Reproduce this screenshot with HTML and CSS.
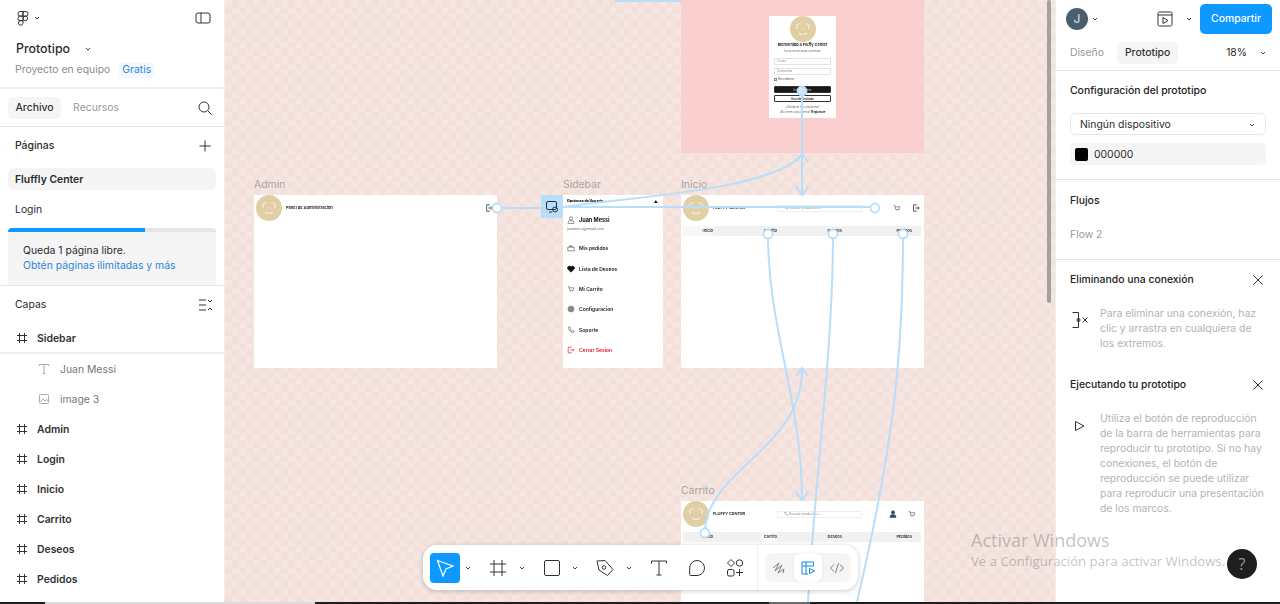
FILE: index.html
```html
<!DOCTYPE html>
<html lang="es">
<head>
<meta charset="utf-8">
<title>Prototipo</title>
<link rel="stylesheet" href="styles.css">
</head>
<body>
<div class="app">
  <div class="main">
    <aside class="left">
      <header class="file-head">
        <div class="logo-row">
          <svg class="ic16" viewBox="0 0 16 16"><path d="M8 1.500H5.200a2.300 2.300 0 0 0 0 4.600H8zM8 1.500h2.800a2.300 2.300 0 0 1 0 4.600H8zM8 6.100H5.200a2.300 2.300 0 0 0 0 4.600H8zM8 8.400a2.300 2.300 0 1 1 4.600 0 2.300 2.300 0 0 1-4.600 0zM8 10.700H5.200A2.300 2.300 0 1 0 8 13z"/></svg>
          <svg class="chev" viewBox="0 0 8 8"><path d="M2 3l2 2 2-2"/></svg>
          <span class="grow"></span>
          <svg class="ic16 panel-ic" viewBox="0 0 16 16"><rect x="1" y="3" width="14" height="10" rx="2"/><path d="M6 3v10"/></svg>
        </div>
        <div class="file-title"><span>Prototipo</span><svg class="chev" viewBox="0 0 8 8"><path d="M2 3l2 2 2-2"/></svg></div>
        <div class="file-sub"><span>Proyecto en equipo</span><span class="badge">Gratis</span></div>
      </header>
      <div class="tabs-row">
        <span class="pill">Archivo</span><span class="muted">Recursos</span><span class="grow"></span>
        <svg class="ic16" viewBox="0 0 16 16"><circle cx="7" cy="7" r="5"/><path d="M11 11l3.500 3.500"/></svg>
      </div>
      <section class="pages">
        <div class="sec-head strong"><span>Páginas</span><svg class="ic16" viewBox="0 0 16 16"><path d="M8 2.500v11M2.500 8h11"/></svg></div>
        <div class="page-row active">Fluffly Center</div>
        <div class="page-row">Login</div>
      </section>
      <div class="upsell">
        <div class="meter"><div class="meter-fill"></div></div>
        <p>Queda 1 página libre.<br><a>Obtén páginas ilimitadas y más</a></p>
      </div>
      <div class="sec-head capas"><span>Capas</span>
        <svg class="ic16" viewBox="0 0 16 16"><path d="M2 3h7M2 8h7M2 13h7M11 3l2 2 2-2M11 13l2-2 2 2"/></svg>
      </div>
      <div class="layer frame sel"><svg class="ic12" viewBox="0 0 12 12"><path d="M3.500 1v10M8.500 1v10M1 3.500h10M1 8.500h10"/></svg>Sidebar</div>
      <div class="layer child"><svg class="ic12 soft" viewBox="0 0 12 12"><path d="M1.500 3V1.500h9V3M6 1.500v9M4.500 10.500h3"/></svg>Juan Messi</div>
      <div class="layer child"><svg class="ic12 soft" viewBox="0 0 12 12"><rect x="1.500" y="1.500" width="9" height="9" rx="1"/><path d="M2 9l3-3 2 2 1.500-1.500L10 8"/></svg>image 3</div>
      <div class="layer frame"><svg class="ic12" viewBox="0 0 12 12"><path d="M3.500 1v10M8.500 1v10M1 3.500h10M1 8.500h10"/></svg>Admin</div>
      <div class="layer frame"><svg class="ic12" viewBox="0 0 12 12"><path d="M3.500 1v10M8.500 1v10M1 3.500h10M1 8.500h10"/></svg>Login</div>
      <div class="layer frame"><svg class="ic12" viewBox="0 0 12 12"><path d="M3.500 1v10M8.500 1v10M1 3.500h10M1 8.500h10"/></svg>Inicio</div>
      <div class="layer frame"><svg class="ic12" viewBox="0 0 12 12"><path d="M3.500 1v10M8.500 1v10M1 3.500h10M1 8.500h10"/></svg>Carrito</div>
      <div class="layer frame"><svg class="ic12" viewBox="0 0 12 12"><path d="M3.500 1v10M8.500 1v10M1 3.500h10M1 8.500h10"/></svg>Deseos</div>
      <div class="layer frame"><svg class="ic12" viewBox="0 0 12 12"><path d="M3.500 1v10M8.500 1v10M1 3.500h10M1 8.500h10"/></svg>Pedidos</div>
    </aside>

    <main class="canvas">
      <div class="section-pink"></div>

      <div class="card login-card">
        <span class="brand"><svg viewBox="0 0 26 26"><path d="M8 8h3M15 8h3M7 8v5M19 8v5M9 17c2 2 6 2 8 0M11 13h1M14 13h1"/></svg></span>
        <b class="l-title">Bienvenido a Fluffy Center</b>
        <span class="l-sub">Inicia sesión para continuar</span>
        <span class="l-input">Correo</span>
        <span class="l-input">Contraseña</span>
        <span class="l-check"><i></i>Recordarme</span>
        <span class="l-btn dark">Iniciar Sesión</span>
        <span class="l-btn">Acceder Invitado</span>
        <span class="l-sub">¿Olvidaste tu contraseña?</span>
        <span class="l-sub">¿No tienes una cuenta? <b>Registrate</b></span>
      </div>

      <span class="label label-admin">Admin</span>
      <div class="card admin">
        <div class="bar-row">
          <span class="brand"><svg viewBox="0 0 26 26"><path d="M8 8h3M15 8h3M7 8v5M19 8v5M9 17c2 2 6 2 8 0M11 13h1M14 13h1"/></svg></span>
          <b class="tiny">Panel de Administracion</b>
          <span class="grow"></span>
          <svg class="mini exit" viewBox="0 0 10 10"><path d="M6 1H2v8h4M4 5h5M7 3l2 2-2 2"/></svg>
        </div>
      </div>

      <span class="label label-side">Sidebar</span>
      <div class="card side">
        <div class="side-head"><b>Opciones de Usuario</b><span>▲</span></div>
        <div class="side-user"><svg class="mini" viewBox="0 0 10 10"><circle cx="5" cy="3" r="2"/><path d="M1.500 9.500V8a2 2 0 0 1 2-2h3a2 2 0 0 1 2 2v1.500z"/></svg><b>Juan Messi</b></div>
        <div class="side-mail">juanmessi@email.com</div>
        <div class="side-row"><svg class="mini" viewBox="0 0 10 10"><path d="M1 4h8v4.500H1zM3 4V2h2v2M5 3h2v1"/></svg>Mis pedidos</div>
        <div class="side-row"><svg class="mini fill" viewBox="0 0 10 10"><path d="M5 9L1 5a2.300 2.300 0 0 1 4-2.500A2.300 2.300 0 0 1 9 5z"/></svg>Lista de Deseos</div>
        <div class="side-row"><svg class="mini" viewBox="0 0 10 10"><path d="M1 2h1.500l1 5h4l1-3.500H3M4 8.500h.5M7 8.500h.5"/></svg>Mi Carrito</div>
        <div class="side-row"><svg class="mini gear" viewBox="0 0 10 10"><circle cx="5" cy="5" r="3.800"/></svg>Configuracion</div>
        <div class="side-row"><svg class="mini" viewBox="0 0 10 10"><path d="M2 1.500C1.500 5 5 8.500 8.500 8l.5-1.500L7 5.500 6 6.500C5 6 4 5 3.500 4l1-1L3.500 1z"/></svg>Soporte</div>
        <div class="side-row red"><svg class="mini" viewBox="0 0 10 10"><path d="M6 1.500H1.500v7H6M4 5h5M7.500 3.500L9 5 7.500 6.500"/></svg>Cerrar Sesion</div>
      </div>

      <span class="label label-inicio">Inicio</span>
      <div class="card shop inicio">
        <div class="bar-row">
          <span class="brand"><svg viewBox="0 0 26 26"><path d="M8 8h3M15 8h3M7 8v5M19 8v5M9 17c2 2 6 2 8 0M11 13h1M14 13h1"/></svg></span>
          <b class="tiny shop-name">FLUFFY CENTER</b>
          <span class="search">🔍︎ Buscar productos...</span>
          <svg class="mini user-ic" viewBox="0 0 10 10"><circle cx="5" cy="3" r="2"/><path d="M1.500 9.500V8a2 2 0 0 1 2-2h3a2 2 0 0 1 2 2v1.500z"/></svg>
          <svg class="mini" viewBox="0 0 10 10"><path d="M1 2h1.500l1 5h4l1-3.500H3M4 8.500h.5M7 8.500h.5"/></svg>
          <svg class="mini exit" viewBox="0 0 10 10"><path d="M6 1H2v8h4M4 5h5M7 3l2 2-2 2"/></svg>
        </div>
        <div class="nav"><span class="on">Inicio</span><span>Carrito</span><span>Deseos</span><span>Pedidos</span></div>
      </div>

      <span class="label label-carrito">Carrito</span>
      <div class="card shop carrito">
        <div class="bar-row">
          <span class="brand"><svg viewBox="0 0 26 26"><path d="M8 8h3M15 8h3M7 8v5M19 8v5M9 17c2 2 6 2 8 0M11 13h1M14 13h1"/></svg></span>
          <b class="tiny shop-name">FLUFFY CENTER</b>
          <span class="search">🔍︎ Buscar productos...</span>
          <svg class="mini fill navy" viewBox="0 0 10 10"><circle cx="5" cy="3" r="2"/><path d="M1.500 9.500V8a2 2 0 0 1 2-2h3a2 2 0 0 1 2 2v1.500z"/></svg>
          <svg class="mini" viewBox="0 0 10 10"><path d="M1 2h1.500l1 5h4l1-3.500H3M4 8.500h.5M7 8.500h.5"/></svg>
        </div>
        <div class="nav"><span>Inicio</span><span class="on">Carrito</span><span>Deseos</span><span>Pedidos</span></div>
      </div>

      <svg class="wires" viewBox="225 0 830 602">
        <path class="w" d="M615 1H681"/>
        <path class="w" d="M497 208H541"/>
        <rect class="hot" x="541" y="195" width="22" height="23"/>
        <g class="hot-ic"><rect x="546.500" y="201.500" width="10" height="8" rx="1.500"/><circle cx="555" cy="209.500" r="2.500"/><path d="M549 212h3"/></g>
        <path class="w" d="M563 207H875"/>
        <path class="w" d="M563 207C640 196 770 190 802 155"/>
        <path class="w" d="M802 91V195"/>
        <path class="w" d="M768 234C768 330 802 400 802 500"/>
        <path class="w" d="M833 234C833 350 815 480 808 602"/>
        <path class="w" d="M903 234C903 350 895 440 857 602"/>
        <path class="w" d="M705 533C705 470 802 450 802 370"/>
        <path class="w" d="M796 162L802 154 808 162M796 187L802 195 808 187M796 376L802 368 808 376M796 492L802 500 808 492"/>
        <circle class="dot" cx="497" cy="208" r="4.500"/>
        <circle class="dot solid" cx="802" cy="91" r="4.500"/>
        <circle class="dot" cx="875" cy="208" r="4.500"/>
        <circle class="dot" cx="768" cy="234" r="4.500"/>
        <circle class="dot" cx="833" cy="234" r="4.500"/>
        <circle class="dot" cx="903" cy="234" r="4.500"/>
        <circle class="dot" cx="705" cy="533" r="4.500"/>
      </svg>

      <div class="scrollbar"></div>

      <nav class="toolbar">
        <span class="tool sel"><svg class="ic20" viewBox="0 0 20 20"><path d="M2.500 2.500L18 8 11 11 8 18z"/></svg></span>
        <svg class="chev" viewBox="0 0 8 8"><path d="M2 3l2 2 2-2"/></svg>
        <span class="tool"><svg class="ic20" viewBox="0 0 20 20"><path d="M6 2v16M14 2v16M2 6h16M2 14h16"/></svg></span>
        <svg class="chev" viewBox="0 0 8 8"><path d="M2 3l2 2 2-2"/></svg>
        <span class="tool"><svg class="ic20" viewBox="0 0 20 20"><rect x="2.500" y="2.500" width="15" height="15" rx="1.500"/></svg></span>
        <svg class="chev" viewBox="0 0 8 8"><path d="M2 3l2 2 2-2"/></svg>
        <span class="tool"><svg class="ic20" viewBox="0 0 20 20"><path d="M2 3L10 2.500 18 11.500 12.500 17.500 4 12z"/><circle cx="9" cy="9.500" r="1.800"/></svg></span>
        <svg class="chev" viewBox="0 0 8 8"><path d="M2 3l2 2 2-2"/></svg>
        <span class="tool"><svg class="ic20" viewBox="0 0 20 20"><path d="M2.500 5.500V3h15v2.500M10 3v14M7.500 17h5"/></svg></span>
        <span class="tool"><svg class="ic20" viewBox="0 0 20 20"><path d="M10 2.500a7.500 7.500 0 0 1 7.500 7.500 7.500 7.500 0 0 1-7.500 7.500H3.500a.8.8 0 0 1-.8-.8V10A7.500 7.500 0 0 1 10 2.500z"/></svg></span>
        <span class="tool"><svg class="ic20" viewBox="0 0 20 20"><path d="M6 1.500L9.500 5 6 8.500 2.500 5z"/><circle cx="14.500" cy="5" r="3.200"/><rect x="2.500" y="11.500" width="6.500" height="6.500" rx="1.500"/><path d="M14.500 11v7M11 14.500h7"/></svg></span>
        <span class="divider"></span>
        <span class="modes">
          <span class="mode"><svg class="ic16 grey" viewBox="0 0 16 16"><path d="M2 8l6-5-4 8 7-6-4 8 6-4-1 4"/></svg></span>
          <span class="mode on"><svg class="ic16 blue" viewBox="0 0 16 16"><path d="M13.500 6V2H2v12h6M2 6h11.500M6 2v12"/><path d="M9.500 8.500l5 2.500-5 2.500z"/></svg></span>
          <span class="mode"><svg class="ic16 grey" viewBox="0 0 16 16"><path d="M5 4.500L1.500 8 5 11.500M11 4.500L14.500 8 11 11.500M9.500 3L6.500 13"/></svg></span>
        </span>
      </nav>
    </main>

    <aside class="right">
      <div class="top-row">
        <span class="avatar">J</span>
        <svg class="chev" viewBox="0 0 8 8"><path d="M2 3l2 2 2-2"/></svg>
        <span class="grow"></span>
        <svg class="ic16 play-ic" viewBox="0 0 16 16"><rect x="1" y="1" width="14" height="14" rx="1.500"/><path d="M1 4h14M6 6.500L11 9.500 6 12.500z"/></svg>
        <svg class="chev" viewBox="0 0 8 8"><path d="M2 3l2 2 2-2"/></svg>
        <span class="share">Compartir</span>
      </div>
      <div class="tab-line">
        <span class="muted">Diseño</span><span class="pill">Prototipo</span><span class="grow"></span><span>18%</span>
        <svg class="chev" viewBox="0 0 8 8"><path d="M2 3l2 2 2-2"/></svg>
      </div>
      <section class="block config">
        <h3>Configuración del prototipo</h3>
        <div class="select"><span>Ningún dispositivo</span><svg class="chev" viewBox="0 0 8 8"><path d="M2 3l2 2 2-2"/></svg></div>
        <div class="color"><i></i><span>000000</span></div>
      </section>
      <section class="block flows">
        <h3>Flujos</h3>
        <div class="flow">Flow 2</div>
      </section>
      <section class="tip first">
        <div class="tip-head"><h3>Eliminando una conexión</h3><svg class="ic12 dark" viewBox="0 0 12 12"><path d="M1.500 1.500l9 9M10.500 1.500l-9 9"/></svg></div>
        <div class="tip-body">
          <svg class="ic20 tip-ic" viewBox="0 0 20 20"><path d="M2.500 1.500h6v15h-6"/><circle cx="8.500" cy="9" r="1.500"/><path d="M12.500 6.500l5 5M17.500 6.500l-5 5"/></svg>
          <p>Para eliminar una conexión, haz clic y arrastra en cualquiera de los extremos.</p>
        </div>
      </section>
      <section class="tip">
        <div class="tip-head"><h3>Ejecutando tu prototipo</h3><svg class="ic12 dark" viewBox="0 0 12 12"><path d="M1.500 1.500l9 9M10.500 1.500l-9 9"/></svg></div>
        <div class="tip-body">
          <svg class="ic20 tip-ic" viewBox="0 0 20 20"><path d="M5.500 5.500L14 10l-8.500 4.500z"/></svg>
          <p>Utiliza el botón de reproducción de la barra de herramientas para reproducir tu prototipo. Si no hay conexiones, el botón de reproducción se puede utilizar para reproducir una presentación de los marcos.</p>
        </div>
      </section>
    </aside>
  </div>
  <div class="taskbar"><span class="tb a"></span><span class="tb b"></span><span class="tb c"></span><span class="tb d"></span><span class="tb e"></span></div>
  <div class="watermark"><div class="wm1">Activar Windows</div><div class="wm2">Ve a Configuración para activar Windows.</div></div>
  <div class="help">?</div>
</div>
</body>
</html>
```

FILE: styles.css
```css
* { box-sizing: border-box; }
html, body { margin: 0; height: 100%; overflow: hidden; }
body { font: 10.400px/16px Inter, "Liberation Sans", sans-serif; color: #2c2c2c; background: #fff; }
.app { position: relative; width: 1280px; height: 604px; display: flex; flex-direction: column; overflow: hidden; }
.main { display: flex; height: 602px; flex: none; }
.grow { flex: 1; }
svg { display: block; flex: none; fill: none; stroke: #333; stroke-width: 1; }
.ic16 { width: 16px; height: 16px; }
.ic12 { width: 12px; height: 12px; }
.ic20 { width: 20px; height: 20px; }
.chev { width: 8px; height: 8px; stroke: #444; }
.muted { color: #999; }
.pill { background: #f5f5f5; border-radius: 5px; font-weight: 500; color: #333; }

.left { width: 225px; flex: none; background: #fff; border-right: 1px solid #eee; overflow: hidden; }
.file-head { height: 89px; padding: 10px 15px 0; border-bottom: 2px solid #f0f0f0; }
.logo-row { display: flex; align-items: center; gap: 2px; height: 16px; }
.panel-ic { margin-right: -2px; }
.file-title { display: flex; align-items: center; gap: 14px; margin: 15px 0 0 1px; font-size: 12.400px; font-weight: 500; height: 16px; }
.file-sub { display: flex; align-items: center; gap: 9px; margin-top: 5px; color: #8c8c8c; }
.badge { color: #2a86d6; background: #f1f8fe; border-radius: 4px; padding: 0 3px; }
.tabs-row { display: flex; align-items: center; height: 38px; padding: 0 11px 0 8px; border-bottom: 1px solid #e6e6e6; }
.tabs-row .pill { padding: 3px 7.500px; }
.tabs-row .muted { margin-left: 12px; }
.sec-head { display: flex; justify-content: space-between; align-items: center; padding: 0 11px 0 15px; }
.sec-head.strong { height: 41px; padding-bottom: 3px; font-weight: 500; }
.page-row { height: 22px; margin: 0 8px 8px; padding: 0 7px; line-height: 24px; }
.page-row.active { background: #f5f5f5; border-radius: 5px; font-weight: 600; }
.pages { height: 93px; }
.upsell { margin: 8px 8px 0; height: 57px; background: #f5f5f5; border-radius: 4px 4px 0 0; overflow: hidden; }
.meter { height: 4px; background: #e6e6e6; }
.meter-fill { width: 66%; height: 100%; background: #0d99ff; }
.upsell p { margin: 11px 0 0 15px; line-height: 15px; }
.upsell a { color: #2a86d6; }
.capas { height: 39px; padding-bottom: 1px; border-top: 1px solid #e6e6e6; }
.layer { display: flex; align-items: center; gap: 9px; height: 30px; padding: 2px 0 0 16px; }
.layer svg { margin-top: -2px; }
.layer.frame { font-weight: 600; color: #333; }
.layer.sel { height: 31px; border-bottom: 2px solid #f0f0f0; margin-top: -1px; }
.layer.child { padding-left: 38px; gap: 10px; color: #777; }
.soft { stroke: #aaa; }

.canvas { position: relative; flex: 1; overflow: hidden;
  background-color: #f6e6e2;
  background-image: conic-gradient(#f3e0db 25%, transparent 0 50%, #f3e0db 0 75%, transparent 0);
  background-size: 14px 14px; }
.section-pink { position: absolute; left: 456px; top: 0; width: 243px; height: 153px; background: #f9cfcf; }
.card { position: absolute; background: #fff; overflow: hidden; color: #111; }
.card > * { filter: blur(.3px); }
.label { position: absolute; color: #aaa5a2; font-size: 10.400px; line-height: 14px; }
.label-admin { left: 29px; top: 178px; }
.label-side { left: 338px; top: 178px; }
.label-inicio { left: 456px; top: 178px; }
.label-carrito { left: 456px; top: 484px; }
.admin { left: 29px; top: 195px; width: 243px; height: 173px; }
.side { left: 338px; top: 195px; width: 100px; height: 173px; padding: 4px 4px 0; }
.inicio { left: 456px; top: 195px; width: 243px; height: 173px; }
.carrito { left: 456px; top: 501px; width: 243px; height: 103px; }
.brand { width: 26px; height: 26px; border-radius: 50%; background: #e0cfa5; display: block; flex: none; }
.brand svg { width: 26px; height: 26px; stroke: #f6eedb; stroke-width: 1.200; }
.bar-row { display: flex; align-items: center; height: 26px; padding: 0 4px 0 2px; margin-bottom: 5px; }
.tiny { font-size: 4px; line-height: 6px; margin-left: 4px; font-weight: 600; }
.mini { width: 8px; height: 8px; stroke-width: .8; stroke: #555; }
.mini.exit { stroke: #333; stroke-width: 1; }
.mini.fill { fill: #111; stroke: #111; }
.mini.navy { fill: #35485a; stroke: #35485a; }
.mini.gear { fill: #888; stroke: #888; }
.shop-name { width: 64px; }
.search { width: 85px; height: 7px; border: 1px solid #eee; font-size: 3.500px; line-height: 5px; color: #888; padding-left: 6px; margin-right: 27px; font-family: Inter, "Noto Sans", sans-serif; }
.shop .mini { margin-right: 11px; }
.shop .mini:last-child { margin-right: 0; }
.shop.inicio .search { margin-right: 9px; }
.shop.inicio .user-ic { margin-right: 14px; }
.nav { display: grid; grid-template-columns: 30px 64px 65px 70px; margin: 0 3px 0 2px; height: 10px; background: #f1f1f1; font-size: 4px; line-height: 10px; font-weight: 600; text-align: right; color: #333; }
.inicio .nav .on { background: #f7f7f7; }
.carrito .nav .on { background: linear-gradient(90deg, transparent 48px, #f9f9f9 48px); }
.side-head { display: flex; justify-content: space-between; font-size: 3.500px; line-height: 5px; font-weight: 600; }
.side-head span { font-size: 4px; margin-right: 1px; }
.side-user { display: flex; align-items: center; gap: 4px; margin-top: 11px; height: 9px; font-size: 5.500px; }
.side-mail { font-size: 3.500px; line-height: 5px; color: #666; margin-top: 3px; }
.side-row { display: flex; align-items: center; gap: 4px; height: 20.400px; font-size: 5px; font-weight: 600; color: #222; }
.side-mail + .side-row { margin-top: 6px; }
.red { color: #e0162b; }
.red .mini { stroke: #e0162b; }
.login-card { left: 544px; top: 16px; width: 67px; height: 102px; display: flex; flex-direction: column; align-items: center; padding: 0 5px; }
.l-title { font-size: 3.900px; line-height: 6px; white-space: nowrap; font-weight: 600; }
.l-sub { font-size: 2.800px; line-height: 4px; color: #666; white-space: nowrap; margin-top: 1px; }
.l-sub b { color: #111; }
.l-input { width: 100%; height: 7px; border: 1px solid #e2e2e2; font-size: 2.800px; line-height: 5px; color: #888; margin-top: 3px; padding-left: 2px; }
.l-sub + .l-input { margin-top: 5px; }
.l-check { width: 100%; display: flex; align-items: center; gap: 1px; font-size: 2.800px; line-height: 5px; margin-top: 2px; color: #555; }
.l-check i { width: 3px; height: 3px; border: .5px solid #888; }
.l-btn { width: 100%; height: 7px; border: .5px solid #333; border-radius: 1px; font-size: 2.800px; line-height: 6px; text-align: center; font-weight: 600; margin-top: 2px; }
.l-btn.dark { background: #181818; color: #bbb; margin-top: 4px; }
.l-btn + .l-sub { margin-top: 3px; }

.wires { position: absolute; left: 0; top: 0; width: 830px; height: 602px; }
.w { stroke: #b9defa; stroke-width: 2; fill: none; }
.hot { fill: #b9defa; stroke: none; }
.hot-ic { stroke: #20303c; fill: none; }
.dot { fill: #fff; stroke: #b9defa; stroke-width: 1.800; }
.dot.solid { fill: #cfe8fc; }
.scrollbar { position: absolute; left: 822px; top: 0; width: 4px; height: 303px; background: #a3a09e; border-radius: 2px; }

.toolbar { position: absolute; left: 198px; top: 545px; width: 435px; height: 45px; background: #fff; border-radius: 14px; box-shadow: 0 1px 5px rgba(0,0,0,.22); display: flex; align-items: center; padding: 0 7px; }
.tool { width: 30px; height: 30px; border-radius: 4px; display: flex; align-items: center; justify-content: center; }
.tool.sel { background: #0d99ff; }
.tool.sel svg { stroke: #fff; stroke-width: 1.200; }
.toolbar > .chev { margin-left: 4.500px; }
.toolbar > .chev + .tool { margin-left: 11px; }
.tool + .tool { margin-left: 8px; }
.divider { width: 1px; height: 45px; background: #eee; margin: 0 7px 0 7.500px; }
.modes { display: flex; width: 86px; height: 29px; border-radius: 7px; background: #f5f5f5; }
.mode { flex: 1; display: flex; align-items: center; justify-content: center; border-radius: 6px; }
.mode.on { background: #fff; box-shadow: 0 0 2px rgba(0,0,0,.12); }
.grey { stroke: #808080; }
.blue { stroke: #0d8de0; }

.right { width: 225px; flex: none; background: #fff; border-left: 1px solid #eee; }
.top-row { display: flex; align-items: center; height: 37px; padding: 0 8px 0 10px; }
.avatar { width: 22px; height: 22px; border-radius: 50%; background: #4a5f6e; color: #cfd6db; text-align: center; line-height: 22px; font-size: 12px; font-weight: 500; }
.top-row .chev { margin-left: 3px; }
.top-row .play-ic + .chev { margin: 0 7px 0 12px; }
.share { width: 72px; height: 30px; border-radius: 5px; background: #0d99ff; color: #fff; text-align: center; line-height: 30px; font-weight: 500; }
.tab-line { display: flex; align-items: center; height: 34px; padding: 0 11px 2px 14px; border-bottom: 1px solid #e6e6e6; }
.tab-line .pill { margin-left: 13px; padding: 3px 8px; }
.tab-line .chev { margin-left: 12px; margin-right: 2px; }
h3 { margin: 0; font-size: 10.400px; line-height: 16px; font-weight: 500; color: #222; }
.block { padding: 0 14px; }
.config { height: 109px; padding-top: 12px; border-bottom: 1px solid #e6e6e6; }
.select { display: flex; justify-content: space-between; align-items: center; height: 22px; margin: 14px 0 8px; padding: 2px 9px 0; border: 1px solid #e6e6e6; border-radius: 5px; }
.color { display: flex; align-items: center; gap: 6px; height: 22px; padding: 2px 0 0 5px; background: #f5f5f5; border-radius: 5px; }
.color i { width: 13px; height: 13px; margin-top: -2px; background: #000; border-radius: 2px; }
.flows { height: 80px; padding-top: 13px; border-bottom: 1px solid #e6e6e6; }
.flow { margin-top: 18px; color: #999; }
.tip { padding: 0 16px 0 14px; }
.tip.first { height: 117px; padding-top: 12px; }
.tip-head { display: flex; justify-content: space-between; align-items: center; height: 16px; }
.tip-body { display: flex; margin-top: 18px; }
.tip-ic { margin: 5px 10px 0 0; }
.tip-body p { margin: 0; width: 168px; flex: none; color: #b3b3b3; line-height: 15px; }

.taskbar { display: flex; height: 2px; flex: none; background: #1e1e1e; }
.tb { display: block; height: 2px; }
.a { width: 45px; background: #1e1e1e; }
.b { width: 270px; background: #dcdcdc; }
.c { width: 454px; background: #1e1e1e; }
.d { width: 41px; background: #6a6a6a; }
.e { flex: 1; background: #1e1e1e; }
.watermark { position: absolute; left: 971px; top: 528px; color: rgba(110,110,110,.42); font-family: "Open Sans", sans-serif; white-space: nowrap; pointer-events: none; }
.wm1 { font-size: 18px; line-height: 24px; }
.wm2 { font-size: 13.200px; line-height: 18px; }
.help { position: absolute; left: 1227px; top: 549px; width: 30px; height: 30px; border-radius: 50%; background: #1e1e1e; color: #9a9a9a; text-align: center; font: 16px/30px "Open Sans", sans-serif; }
```
